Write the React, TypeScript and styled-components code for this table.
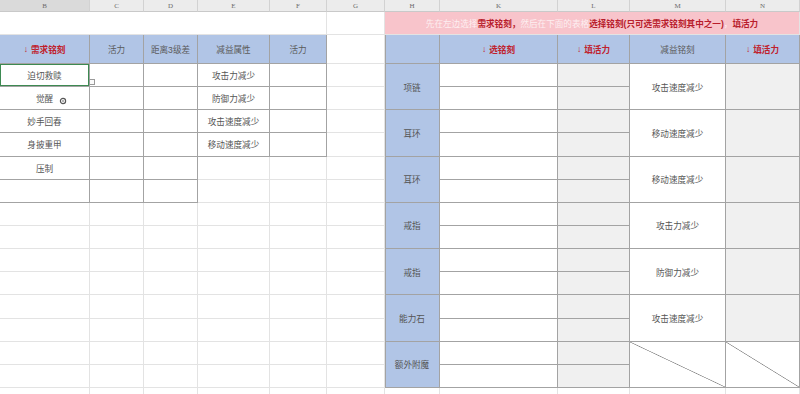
import React from 'react';
import styled, { createGlobalStyle, css } from 'styled-components';

const GlobalStyle = createGlobalStyle`
  html, body {
    margin: 0;
    padding: 0;
    background: #fff;
    overflow: hidden;
  }
  body {
    font-family: "Liberation Sans", "Noto Sans CJK SC", sans-serif;
  }
`;

const COLS = [90, 54, 54, 72, 57, 58, 55, 118, 72, 96, 74];
const LETTERS = ['B', 'C', 'D', 'E', 'F', 'G', 'H', 'K', 'L', 'M', 'N'];

type Fill = 'white' | 'blue' | 'gray' | 'pink';
type Line = 'grid' | 'table';
type Tone = 'text' | 'red' | 'muted';

const fills: Record<Fill, string> = {
  white: '#ffffff',
  blue: '#b1c5e6',
  gray: '#f0f0f0',
  pink: '#f8c4cb',
};

const lines: Record<Line, string> = {
  grid: '#e3e3e3',
  table: '#a3a3a3',
};

const tones: Record<Tone, string> = {
  text: '#555555',
  red: '#c0202c',
  muted: '#5a5a5a',
};

const Sheet = styled.div`
  display: grid;
  grid-template-columns: ${COLS.map((w) => `${w}px`).join(' ')};
  grid-template-rows: 12px 23px 29px repeat(15, 23.15px);
  width: 800px;
  height: 394px;
  overflow: hidden;
`;

const ColHead = styled.div<{ $active?: boolean }>`
  display: flex;
  align-items: center;
  justify-content: center;
  box-sizing: border-box;
  background: ${(p) => (p.$active ? '#dadada' : '#ececec')};
  border-right: 1px solid #d2d2d2;
  border-bottom: 1px solid #c9c9c9;
  color: #6b6b6b;
  font-family: "Liberation Serif", serif;
  font-size: 7px;
`;

interface CellProps {
  $c: number;
  $r: number;
  $cs?: number;
  $rs?: number;
  $fill?: Fill;
  $right?: Line;
  $bottom?: Line;
  $tone?: Tone;
  $bold?: boolean;
  $diag?: boolean;
  $edge?: boolean;
  $selected?: boolean;
}

const Cell = styled.div<CellProps>`
  grid-column: ${(p) => p.$c} / span ${(p) => p.$cs ?? 1};
  grid-row: ${(p) => p.$r} / span ${(p) => p.$rs ?? 1};
  position: relative;
  display: flex;
  align-items: center;
  justify-content: center;
  box-sizing: border-box;
  background-color: ${(p) => fills[p.$fill ?? 'white']};
  border-right: 1px solid ${(p) => lines[p.$right ?? 'grid']};
  border-bottom: 1px solid ${(p) => lines[p.$bottom ?? 'grid']};
  color: ${(p) => tones[p.$tone ?? 'text']};
  font-weight: ${(p) => (p.$bold ? 700 : 400)};
  font-size: 8.6px;
  white-space: nowrap;
  ${(p) =>
    p.$diag &&
    css`
      background-image: linear-gradient(
        to top right,
        transparent calc(50% - 0.7px),
        #8d8d8d 50%,
        transparent calc(50% + 0.7px)
      );
    `}
  ${(p) => p.$edge && css`box-shadow: inset 1px 0 0 #a3a3a3;`}
  ${(p) => p.$selected && css`box-shadow: inset 0 0 0 1px #3d8a52;`}
`;

const Arrow = styled.span`
  font-weight: 400;
  margin-right: 3px;
`;

const Faint = styled.span`
  color: rgba(255, 255, 255, 0.75);
`;

const Hot = styled.span`
  color: #b81d2c;
  font-weight: 700;
`;

const FillHandle = styled.span`
  position: absolute;
  right: -6px;
  bottom: 1px;
  width: 4px;
  height: 4px;
  border: 1px solid #9a9a9a;
  background: #fafafa;
  z-index: 2;
`;

const Cursor = styled.svg`
  position: absolute;
  left: 59px;
  top: 10px;
`;

const leftNames = ['迫切救赎', '觉醒', '妙手回春', '身披重甲', '压制', ''];
const leftDebuffs = ['攻击力减少', '防御力减少', '攻击速度减少', '移动速度减少'];
const leftHeads = ['活力', '距离3级差', '减益属性', '活力'];

const slots = [
  { name: '项链', debuff: '攻击速度减少' },
  { name: '耳环', debuff: '移动速度减少' },
  { name: '耳环', debuff: '移动速度减少' },
  { name: '戒指', debuff: '攻击力减少' },
  { name: '戒指', debuff: '防御力减少' },
  { name: '能力石', debuff: '攻击速度减少' },
  { name: '额外附魔', debuff: '' },
];

const FIRST = 4;
const LAST = 18;

function LeftSheet() {
  const cells: React.ReactNode[] = [];

  cells.push(<Cell key="b2" $c={1} $r={2} $cs={5} />);
  cells.push(<Cell key="g2" $c={6} $r={2} />);

  cells.push(
    <Cell key="h-b" $c={1} $r={3} $fill="blue" $right="table" $bottom="table" $tone="red" $bold>
      <Arrow>↓</Arrow>需求铭刻
    </Cell>
  );
  leftHeads.forEach((t, i) =>
    cells.push(
      <Cell key={`h-${i}`} $c={i + 2} $r={3} $fill="blue" $right="table" $bottom="table" $tone="muted">
        {t}
      </Cell>
    )
  );
  cells.push(<Cell key="h-g" $c={6} $r={3} />);

  for (let r = FIRST; r <= LAST; r++) {
    const i = r - FIRST;
    for (let c = 1; c <= 6; c++) {
      const inMain = c <= 3 && i < leftNames.length;
      const inDebuff = (c === 4 || c === 5) && i < leftDebuffs.length;
      const table = inMain || inDebuff;
      let text: React.ReactNode = null;
      if (c === 1 && inMain) text = leftNames[i];
      if (c === 4 && inDebuff) text = leftDebuffs[i];
      cells.push(
        <Cell
          key={`${r}-${c}`}
          $c={c}
          $r={r}
          $right={table ? 'table' : 'grid'}
          $bottom={table ? 'table' : 'grid'}
          $selected={c === 1 && i === 0}
        >
          {text}
          {c === 1 && i === 0 && <FillHandle />}
          {c === 1 && i === 1 && (
            <Cursor width="8" height="8" viewBox="0 0 8 8">
              <circle cx="4" cy="4" r="2.6" fill="none" stroke="#555" strokeWidth="1.2" />
              <circle cx="4" cy="4" r="0.8" fill="#555" />
            </Cursor>
          )}
        </Cell>
      );
    }
  }
  return <>{cells}</>;
}

function RightTable() {
  const cells: React.ReactNode[] = [];

  cells.push(
    <Cell key="banner" $c={7} $r={2} $cs={5} $fill="pink">
      <Faint>先在左边选择</Faint>
      <Hot>需求铭刻，</Hot>
      <Faint>然后在下面的表格</Faint>
      <Hot>选择铭刻(只可选需求铭刻其中之一)</Hot>
      <Faint>，</Faint>
      <Hot>填活力</Hot>
    </Cell>
  );

  const redHead = (key: string, c: number, label: string) => (
    <Cell key={key} $c={c} $r={3} $fill="blue" $right="table" $bottom="table" $tone="red" $bold>
      <Arrow>↓</Arrow>
      {label}
    </Cell>
  );

  cells.push(<Cell key="hh" $c={7} $r={3} $fill="blue" $right="table" $bottom="table" $edge />);
  cells.push(redHead('hk', 8, '选铭刻'));
  cells.push(redHead('hl', 9, '填活力'));
  cells.push(
    <Cell key="hm" $c={10} $r={3} $fill="blue" $right="table" $bottom="table" $tone="muted">
      减益铭刻
    </Cell>
  );
  cells.push(redHead('hn', 11, '填活力'));

  slots.forEach((s, g) => {
    const r = FIRST + g * 2;
    const last = g === slots.length - 1;
    cells.push(
      <Cell key={`n${g}`} $c={7} $r={r} $rs={2} $fill="blue" $right="table" $bottom="table" $edge>
        {s.name}
      </Cell>
    );
    [0, 1].forEach((k) => {
      cells.push(<Cell key={`k${g}${k}`} $c={8} $r={r + k} $right="table" $bottom="table" />);
      cells.push(
        <Cell key={`l${g}${k}`} $c={9} $r={r + k} $fill="gray" $right="table" $bottom="table" />
      );
    });
    cells.push(
      <Cell key={`m${g}`} $c={10} $r={r} $rs={2} $right="table" $bottom="table" $diag={last}>
        {s.debuff}
      </Cell>
    );
    cells.push(
      <Cell
        key={`v${g}`}
        $c={11}
        $r={r}
        $rs={2}
        $fill={last ? 'white' : 'gray'}
        $right="table"
        $bottom="table"
        $diag={last}
      />
    );
  });

  for (let c = 7; c <= 11; c++) cells.push(<Cell key={`tail${c}`} $c={c} $r={LAST} />);
  return <>{cells}</>;
}

export default function App() {
  return (
    <>
      <GlobalStyle />
      <Sheet>
        {LETTERS.map((l, i) => (
          <ColHead key={l} $active={i === 0}>
            {l}
          </ColHead>
        ))}
        <LeftSheet />
        <RightTable />
      </Sheet>
    </>
  );
}
